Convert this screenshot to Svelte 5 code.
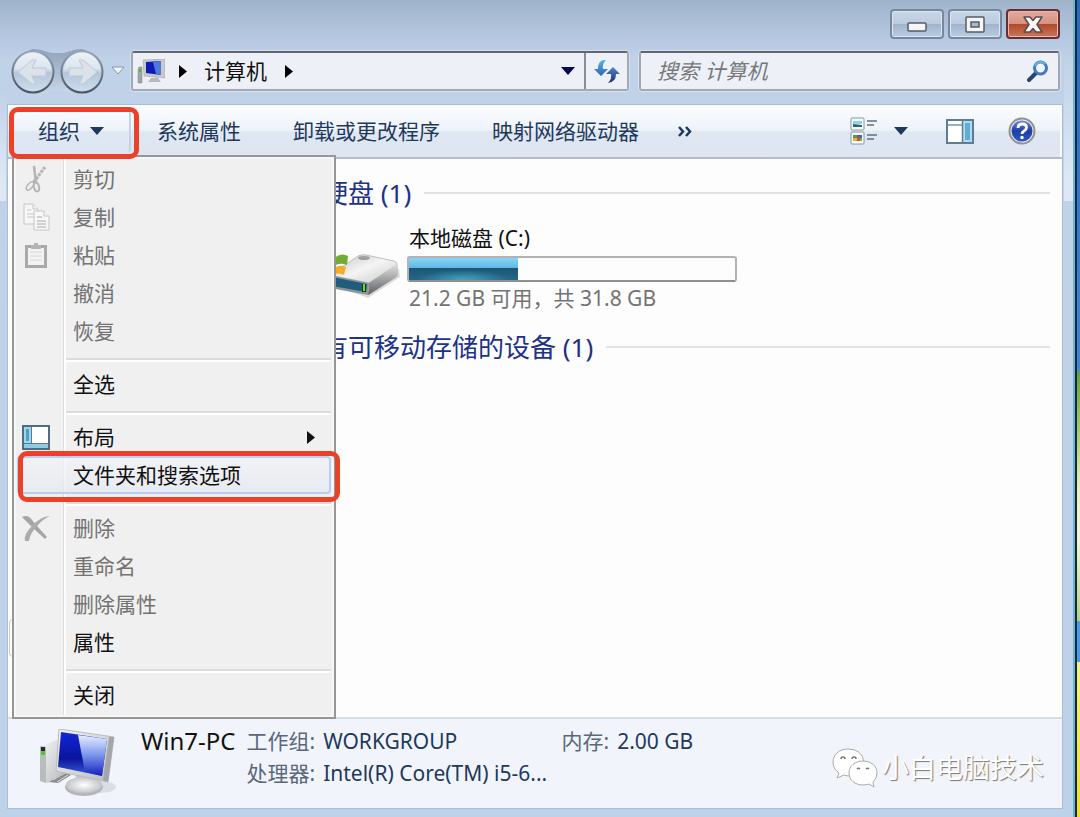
<script>
  const commands = ['系统属性', '卸载或更改程序', '映射网络驱动器'];

  const menu = [
    { label: '剪切', icon: 'cut', disabled: true },
    { label: '复制', icon: 'copy', disabled: true },
    { label: '粘贴', icon: 'paste', disabled: true },
    { label: '撤消', disabled: true },
    { label: '恢复', disabled: true },
    { separator: true },
    { label: '全选' },
    { separator: true },
    { label: '布局', icon: 'layout', submenu: true },
    { label: '文件夹和搜索选项', active: true },
    { separator: true },
    { label: '删除', icon: 'delete', disabled: true },
    { label: '重命名', disabled: true },
    { label: '删除属性', disabled: true },
    { label: '属性' },
    { separator: true },
    { label: '关闭' },
  ];

  const drive = { name: '本地磁盘 (C:)', free: 21.2, total: 31.8 };
  const used = ((drive.total - drive.free) / drive.total) * 100;
</script>

{#snippet computer()}
  <svg viewBox="0 0 80 70" aria-hidden="true">
    <defs>
      <linearGradient id="scr" x1="0" y1="0" x2="0" y2="1">
        <stop offset="0" stop-color="#1226d8" /><stop offset=".6" stop-color="#0a159c" /><stop offset="1" stop-color="#3a5fd8" />
      </linearGradient>
      <linearGradient id="shine" x1="0" y1="0" x2="0" y2="1">
        <stop offset="0" stop-color="#e6efff" /><stop offset=".5" stop-color="#7893ea" /><stop offset="1" stop-color="#1420c0" />
      </linearGradient>
      <linearGradient id="metal" x1="0" y1="0" x2="1" y2="1">
        <stop offset="0" stop-color="#f6f6f6" /><stop offset="1" stop-color="#b9bbbd" />
      </linearGradient>
      <radialGradient id="foot"><stop offset="0" stop-color="#fff" /><stop offset="1" stop-color="#c2c4c7" /></radialGradient>
    </defs>
    <ellipse cx="62" cy="58" rx="15" ry="6" fill="#5a6470" opacity=".15" />
    <path d="M1 17 18 11 25 14V48L8 54 1 52Z" fill="url(#metal)" />
    <path d="M1 17 7 18V54L1 52Z" fill="#b9bcbe" />
    <path d="M2 18h4v5H2z" fill="#252b31" /><path d="M2 22h4v4H2z" fill="#58c42b" />
    <path d="M10 53 26 43 32 46 19 54Z" fill="#888c91" /><path d="M14 51 26 44M18 53 29 46" stroke="#ddd" />
    <path d="M37 43 55 48 57 57H36Z" fill="#c6c8ca" />
    <ellipse cx="45" cy="58" rx="19" ry="9" fill="#b4b6b9" /><ellipse cx="45" cy="56" rx="18" ry="8" fill="url(#foot)" />
    <path d="M20 0 75 8 69 53 17 42Z" fill="url(#metal)" stroke="#b9bbbe" />
    <path d="M70 8 75 8 69 53 64 51Z" fill="#a3a6a9" />
    <path d="M22 3 68 10 63 47 19 38Z" fill="url(#scr)" />
    <path d="M39 6 68 10 63 47 46 43Z" fill="url(#shine)" />
  </svg>
{/snippet}

<div class="desktop">
  <div class="window">
    <header>
      <div class="caption">
        <button class="cap" aria-label="最小化">
          <svg width="20" height="10" viewBox="0 0 20 10"><rect x="1" y="1" width="18" height="8" rx="1" fill="#f5f5f5" stroke="#555c66" stroke-width="1.5" /></svg>
        </button>
        <button class="cap" aria-label="最大化">
          <svg width="20" height="17" viewBox="0 0 20 17"><rect x="1" y="1" width="18" height="15" rx="1" fill="#f5f5f5" stroke="#555c66" stroke-width="1.5" /><rect x="6" y="6" width="8" height="5" fill="#a6bbd0" stroke="#555c66" stroke-width="1.5" /></svg>
        </button>
        <button class="cap close" aria-label="关闭窗口">
          <svg width="20" height="17" viewBox="0 0 20 17"><path d="M1 1h6l3 3.500 3-3.500h6l-5 7.500 5 7.500h-6l-3-3.500-3 3.500H1l5-7.500Z" fill="#f7f7f7" stroke="#5b4a4e" stroke-width="1.500" stroke-linejoin="round" /></svg>
        </button>
      </div>
      <div class="nav">
        <div class="travel">
          <button aria-label="后退和前进">
            <svg width="98" height="46" viewBox="0 0 98 46">
              <defs>
                <linearGradient id="orb" x1="0" y1="0" x2="0" y2="1">
                  <stop offset="0" stop-color="#e4ebf4" /><stop offset=".48" stop-color="#c6d4e4" /><stop offset=".52" stop-color="#b5c6da" /><stop offset="1" stop-color="#cfdeef" />
                </linearGradient>
                <linearGradient id="ring" x1="0" y1="0" x2="0" y2="1">
                  <stop offset="0" stop-color="#95a4b6" /><stop offset="1" stop-color="#4a535e" />
                </linearGradient>
                <linearGradient id="tray" x1="0" y1="0" x2="0" y2="1">
                  <stop offset="0" stop-color="#71859c" /><stop offset=".6" stop-color="#a3b6cd" /><stop offset="1" stop-color="#cfdded" />
                </linearGradient>
              </defs>
              <path d="M25 1C33 1 38 4 44 5H55C61 4 66 1 74 1A23 23 0 0 1 74 46Q66 46 60 43H39Q33 46 25 46A23 23 0 0 1 25 1Z" fill="url(#tray)" opacity=".6" />
              {#each [25, 74] as x}
                <circle cx={x} cy="24" r="20.500" fill="url(#orb)" stroke="url(#ring)" stroke-width="2" />
                <path d="M{x - 18} 22A18 18 0 0 1 {x + 18} 22Q{x} 18 {x - 18} 22" fill="#fff" opacity=".35" />
              {/each}
              <path d="M10 24 24 12H28L24 20H38V28H24L28 36H24Z" fill="#dbe2ea" stroke="#bcc9d8" />
              <path d="M89 24 75 12H71L75 20H61V28H75L71 36H75Z" fill="#dbe2ea" stroke="#bcc9d8" />
            </svg>
          </button>
          <button aria-label="最近浏览的位置">
            <svg width="16" height="12" viewBox="0 0 16 12"><path d="M2 2H14L8 9Z" fill="#f1f4f8" stroke="#8796a9" /></svg>
          </button>
        </div>
        <div class="address">
          <span class="mini">
            <svg width="28" height="25" viewBox="0 0 28 25">
              <path d="M1 10 2 8H5V24H1Z" fill="#a0a6ab" stroke="#7f878e" stroke-width=".5" /><path d="M2 10h2v3H2z" fill="#40c51d" />
              <path d="M6 1 28 0V19L7 17Z" fill="#c7cac9" stroke="#999da1" stroke-width=".5" />
              <path d="M9 3 24 2V16L9 14Z" fill="#101bb5" /><path d="M16 3 24 2V16L19 15Z" fill="#4e79e0" />
              <path d="M14 19h7l3 4H11Z" fill="#b7babd" />
            </svg>
          </span>
          <svg class="crumb" width="9" height="13" viewBox="0 0 9 13"><path d="M0 0 8 6.500 0 13Z" /></svg>
          <a href="#computer">计算机</a>
          <svg class="crumb" width="9" height="13" viewBox="0 0 9 13"><path d="M0 0 8 6.500 0 13Z" /></svg>
          <button class="history" aria-label="历史记录"><svg width="14" height="8" viewBox="0 0 14 8"><path d="M0 0H14L7 8Z" fill="#05074f" /></svg></button>
          <button class="refresh" aria-label="刷新">
            <svg width="26" height="24" viewBox="0 0 26 24">
              <defs><linearGradient id="rf" x1="0" y1="0" x2="0" y2="1"><stop offset="0" stop-color="#58b5e4" /><stop offset="1" stop-color="#2f62b4" /></linearGradient><linearGradient id="rg" x1="0" y1="0" x2="0" y2="1"><stop offset="0" stop-color="#4a86d0" /><stop offset="1" stop-color="#1d2f6c" /></linearGradient></defs>
              <path d="M12 1Q5 0 4 8V10H0L7 17 14 10H9Q8 5 12 1Z" fill="url(#rf)" />
              <path d="M14 24Q22 23 22 15H26L19 8 12 15H17Q18 20 14 24Z" fill="url(#rg)" />
            </svg>
          </button>
        </div>
        <div class="search">
          <input type="text" aria-label="搜索" placeholder="搜索 计算机" />
          <svg width="22" height="22" viewBox="0 0 22 22">
            <path d="M9 13 2 20" stroke="#274477" stroke-width="4" stroke-linecap="round" />
            <circle cx="13.500" cy="8" r="6" fill="#f2f6fb" stroke="#3e78c0" stroke-width="3" /><path d="M8 6a6 6 0 0 1 10-2" fill="none" stroke="#65b4dc" stroke-width="2" />
          </svg>
        </div>
      </div>
    </header>

    <div class="body">
      <div class="toolbar">
        <div class="organize">
          <button class="org" aria-haspopup="menu" aria-expanded="true">组织 <svg width="14" height="8" viewBox="0 0 14 8"><path d="M0 0H14L7 8Z" fill="#1e395b" /></svg></button>
          <ul class="menu">
            {#each menu as item}
              {#if item.separator}
                <li class="sep"></li>
              {:else}
                <li class:marked={item.active}>
                  <button disabled={item.disabled} class:active={item.active}>
                    <span class="glyph">
                      {#if item.icon === 'cut'}
                        <svg width="22" height="28" viewBox="0 0 22 28" fill="none" stroke="#b5b5b5">
                          <path d="M9 1 11 18" stroke-width="2.500" /><path d="M20 2 9 17" stroke-width="3" stroke-dasharray="3 1" /><path d="M8 16h4" stroke-width="3" />
                          <ellipse cx="5" cy="21" rx="2.500" ry="5" transform="rotate(40 5 21)" stroke-width="1.500" /><ellipse cx="11.500" cy="22" rx="2.500" ry="4.500" transform="rotate(-15 11.500 22)" stroke-width="2" />
                        </svg>
                      {:else if item.icon === 'copy'}
                        <svg width="27" height="28" viewBox="0 0 27 28" fill="#f7f7f7" stroke="#c6c6c6">
                          <path d="M1 1h9l5 5v15H1Z" /><path d="M10 1v5h5M4 7h4M4 11h7M4 14h7" />
                          <path d="M11 8h10l5 5v14H11Z" /><path d="M21 8v5h5" /><path d="M14 14h5M14 18h9M14 21h9M14 24h9" stroke="#aaa" />
                        </svg>
                      {:else if item.icon === 'paste'}
                        <svg width="22" height="25" viewBox="0 0 22 25"><path d="M1.500 3.500h19v20h-19Z" fill="#f3f3f3" stroke="#a9a9a9" stroke-width="3" /><path d="M6 6V2h3V0h4v2h3v4Z" fill="#b3b3b3" /><path d="M5 9h12M5 13h12M5 17h12" stroke="#d6d6d6" /></svg>
                      {:else if item.icon === 'layout'}
                        <svg width="28" height="25" viewBox="0 0 28 25"><rect x="1" y="1" width="26" height="23" fill="#fff" stroke="#536a82" stroke-width="2" /><path d="M2 2h7v16H2z" fill="#9bd8ec" /><path d="M4 4h3v12H4z" fill="#4b9fc8" /><path d="M2 19h24v4H2z" fill="#8dcbe0" /><path d="M2 18.500h24M9.500 2v16" stroke="#60788e" /></svg>
                      {:else if item.icon === 'delete'}
                        <svg width="28" height="26" viewBox="0 0 28 26"><path d="M0 2Q6-1 10 5L15 11 25 22 23 24 12 14Q5 7 0 2Z" fill="#a5a5a5" /><path d="M28 1Q19 1 10 11 1 20 3 26L7 26Q8 18 16 10 21 4 28 1Z" fill="#acacac" /></svg>
                      {/if}
                    </span>
                    <span class="label">{item.label}</span>
                    {#if item.submenu}<svg width="8" height="13" viewBox="0 0 8 13"><path d="M0 0 8 6.500 0 13Z" fill="#111" /></svg>{/if}
                  </button>
                </li>
              {/if}
            {/each}
          </ul>
        </div>
        <div class="commands">
          {#each commands as command}<button>{command}</button>{/each}
          <button class="more" aria-label="更多命令"><svg width="14" height="11" viewBox="0 0 14 11"><path d="M1 1 5 5.500 1 10M8 1l4 4.500L8 10" fill="none" stroke="#1e395b" stroke-width="2.500" /></svg></button>
        </div>
        <div class="tools">
          <button aria-label="视图">
            <svg width="28" height="28" viewBox="0 0 28 28">
              <rect x="1" y="1" width="13" height="12" rx="1" fill="#fff" stroke="#7f95ac" /><rect x="1" y="15" width="13" height="12" rx="1" fill="#fff" stroke="#7f95ac" />
              <path d="M3 4h9v3H3z" fill="#8fd4ed" /><path d="M3 7l9 1v2H3z" fill="#27646b" />
              <path d="M3 18h4v3H3z" fill="#55a536" /><path d="M7 18h5v3H7z" fill="#3e64c8" /><path d="M3 21h4v3H3z" fill="#e2b72a" /><path d="M7 20h3v4H7z" fill="#d45135" /><path d="M10 21h2v3h-2z" fill="#71b53a" />
              <path d="M17 4h10M17 8h7M17 18h10M17 22h7" stroke="#5d6f83" stroke-width="1.500" />
            </svg>
          </button>
          <button aria-label="更多选项"><svg width="14" height="8" viewBox="0 0 14 8"><path d="M0 0H14L7 8Z" fill="#1e395b" /></svg></button>
          <button class="pane" aria-label="显示预览窗格">
            <svg width="28" height="25" viewBox="0 0 28 25"><rect x="1" y="1" width="26" height="23" fill="#fff" stroke="#607b96" stroke-width="2" /><path d="M2 6h14" stroke="#7c93aa" stroke-width="1.500" /><path d="M17 2h9v21h-9z" fill="#a7e0f2" /><path d="M19 4h5v17h-5z" fill="#67abd5" /><path d="M16.500 2v21" stroke="#607b96" stroke-width="1.500" /></svg>
          </button>
          <button aria-label="帮助" class="help">
            <svg width="28" height="28" viewBox="0 0 28 28">
              <defs><linearGradient id="hp" x1="0" y1="0" x2="0" y2="1"><stop offset="0" stop-color="#6c8ee0" /><stop offset=".5" stop-color="#1c3ea6" /><stop offset="1" stop-color="#2d57c4" /></linearGradient></defs>
              <circle cx="14" cy="14" r="12.500" fill="#e9e9e7" stroke="#8f9193" stroke-width="2" /><circle cx="14" cy="14" r="10.500" fill="url(#hp)" />
              <path d="M10 11q0-4 4.500-4 4 0 4 3.500 0 2-2.500 3.500-2 1-2 3" fill="none" stroke="#fff" stroke-width="2.800" /><circle cx="14" cy="20.500" r="1.700" fill="#fff" />
            </svg>
          </button>
        </div>
      </div>

      <main>
        <span class="splitter"></span>
        <section>
          <h2>硬盘 (1)</h2>
          <div class="drive">
            <svg class="disk" width="78" height="48" viewBox="0 0 78 48">
              <defs>
                <linearGradient id="top" x1="0" y1="0" x2="1" y2="1"><stop offset="0" stop-color="#bfc1c3" /><stop offset=".5" stop-color="#f5f5f5" /><stop offset="1" stop-color="#c7c8ca" /></linearGradient>
                <linearGradient id="side" x1="0" y1="0" x2="0" y2="1"><stop offset="0" stop-color="#e2e2e2" /><stop offset="1" stop-color="#5c6063" /></linearGradient>
              </defs>
              <path d="M16 37 46 48 78 27 77 19Z" fill="#555" opacity=".2" />
              <path d="M8 25 36 6Q40 4 44 5L72 11Q77 13 73 16L47 33Z" fill="url(#top)" stroke="#aaa" stroke-width=".7" />
              <path d="M47 33 73 16 76 14V24Q76 26 73 28L48 44 46 45Z" fill="url(#side)" />
              <path d="M8 25 47 33 46 45 8 38Z" fill="#8d9498" /><path d="M10 27 45 34 44 42 10 36Z" fill="#205d7c" />
              <ellipse cx="42" cy="8" rx="6" ry="2" fill="#9c9ea0" /><path d="M42 34v8" stroke="#143c2a" stroke-width="4" /><path d="M42 34v7" stroke="#62e324" stroke-width="2" />
              <path d="M12 8Q19 2 26 6L25 15Q18 12 12 16Z" fill="#72ac35" /><path d="M12 18Q18 14 24 17L22 25Q16 22 12 25Z" fill="#f1ad2b" />
            </svg>
            <div class="info">
              <h3>{drive.name}</h3>
              <div class="meter" role="meter" aria-label={drive.name} aria-valuenow={used} aria-valuemin="0" aria-valuemax="100"><div style="width: {used}%"></div></div>
              <p>{drive.free} GB 可用，共 {drive.total} GB</p>
            </div>
          </div>
        </section>
        <section><h2>有可移动存储的设备 (1)</h2></section>
      </main>

      <footer>
        <div class="pc">{@render computer()}</div>
        <strong>Win7-PC</strong>
        <dl>
          <div><dt>工作组:</dt><dd>WORKGROUP</dd></div>
          <div><dt>处理器:</dt><dd>Intel(R) Core(TM) i5-6...</dd></div>
        </dl>
        <dl><div><dt>内存:</dt><dd>2.00 GB</dd></div></dl>
        <div class="brand">
          <svg width="46" height="40" viewBox="0 0 46 40">
            <g fill="#fff" stroke="#aaa">
              <path d="M16 1C7 1 1 7 1 14q0 7 6 11L5 30l7-3q3 1 7 1 13-2 13-14Q30 1 16 1Z" />
              <path d="M31 13c-8 0-14 5-14 12s6 12 14 12q3 0 6-1l5 3-1-5q4-4 4-9c0-7-6-12-14-12Z" />
            </g>
            <g fill="none" stroke="#777" stroke-width="1.500"><path d="M9 11a2 2 0 0 1 4 0M20 11a2 2 0 0 1 4 0M25 21a2 2 0 0 1 3 0M34 21a2 2 0 0 1 3 0" /></g>
          </svg>
          <span>小白电脑技术</span>
        </div>
      </footer>
    </div>
  </div>
</div>

<style>
  :global(body) { margin: 0; }
  * { box-sizing: border-box; }
  .desktop {
    min-height: 100vh;
    padding-right: 5px;
    display: flex;
    background: linear-gradient(#2a68c8, #3d86dc 45%, #6ea53a 46%, #e8f2b8 60%, #f1f7d8 66%, #b4d480 76%, #459cf0 76%, #459cf0 81%, #f6f27c 81%, #f2e020);
    font-family: "Noto Sans", "Noto Sans CJK SC", sans-serif;
    font-size: 21px;
    line-height: 32px;
    color: #111;
  }
  button { font: inherit; color: inherit; background: none; border: 0; padding: 0; margin: 0; display: flex; align-items: center; white-space: nowrap; }
  svg { display: block; flex: none; }
  .window {
    flex: 1;
    min-width: 0;
    display: flex;
    flex-direction: column;
    padding: 0 11px 9px 8px;
    border-right: 2px solid #70b4ce;
    box-shadow: 2px 0 0 #14283c;
    background:
      linear-gradient(#c0d2e800 90px, #dee8f5 180px) left top / 6px 201px no-repeat,
      linear-gradient(#c0d2e800 60px, #dee8f5 180px) right top / 9px 201px no-repeat,
      linear-gradient(#9fb4cb, #b7c9e2 40px, #c0d2e8 60px, #bdd1e8);
  }
  header { display: flex; flex-direction: column; gap: 12px; padding: 9px 2px 14px 0; }
  .caption { display: flex; justify-content: flex-end; gap: 4px; }
  .cap {
    width: 54px; height: 30px; justify-content: center;
    border: 2px solid #77889e; border-radius: 4px;
    background: linear-gradient(#c8d6e6, #bccde0 48%, #9fb4cb 50%, #b9cce3);
    box-shadow: inset 0 0 0 1px #dbe6f2;
  }
  .cap:first-child svg { margin-top: 6px; }
  .close { border-color: #642f35; background: linear-gradient(#e2a99e, #d69383 48%, #b0482c 50%, #c9765a); box-shadow: inset 0 0 0 1px #e8b9ac; }
  .nav { display: grid; grid-template-columns: 113px 498fr 421fr; grid-template-rows: 40px; gap: 10px; align-items: center; }
  .travel { display: flex; align-items: center; gap: 4px; margin-right: -10px; }
  .address, .search { height: 40px; min-width: 0; display: flex; align-items: center; background: #edf1f7; border: 2px solid #a1a9b4; border-top-color: #62676f; border-radius: 3px; box-shadow: 0 0 0 1px #d3e0f0; }
  .address { padding-left: 4px; }
  .mini { margin-right: 14px; }
  .crumb { fill: #000; }
  .address a { color: #111; text-decoration: none; margin: 0 18px 0 16px; }
  .history { margin-left: auto; padding: 12px 9px; }
  .refresh { width: 43px; height: 36px; justify-content: center; border-left: 2px solid #888e96; }
  .search { padding: 0 9px 0 16px; }
  .search input { flex: 1; min-width: 0; height: 34px; padding: 0; border: 0; outline: 0; background: none; font: italic 21px/32px "Noto Sans", "Noto Sans CJK SC", sans-serif; }
  .search input::placeholder { color: #76787c; opacity: 1; }
  .body { flex: 1; display: flex; flex-direction: column; background: #fdfdfd; box-shadow: 0 0 0 1px #a9bdd6; }
  .toolbar {
    height: 54px; display: flex; align-items: center; color: #1e395b;
    background: linear-gradient(#fbfdff, #eef3fa 48%, #dfe7f3 52%, #dfe6f2);
    border-bottom: 2px solid #b1bfd4;
    box-shadow: inset -2px 1px 0 #f8fbff;
  }
  .organize { position: relative; margin-left: 4px; }
  .org { width: 119px; height: 42px; padding-left: 26px; gap: 10px; border-right: 2px solid #c5d2e3; border-radius: 4px; }
  .organize::before, .marked::after { content: ""; position: absolute; z-index: 3; border: 5px solid #ec4128; border-radius: 9px; pointer-events: none; }
  .organize::before { inset: -3px -8px -7px -3px; }
  .menu {
    position: absolute; left: 0; top: 45px; z-index: 2; width: 324px;
    margin: 0; padding: 3px; list-style: none; color: #111;
    border: 2px solid #979797;
    background: linear-gradient(90deg, #0000 49px, #dedede 49px, #dedede 50px, #fff 50px, #fff 52px, #0000 52px), #f0f0f0;
    box-shadow: inset 0 0 0 2px #f7f7f7;
  }
  .menu li { height: 38px; position: relative; }
  .menu .sep { height: 15px; margin-left: 49px; background: linear-gradient(#0000 8px, #dcdcdc 8px, #dcdcdc 10px, #fff 10px, #fff 12px, #0000 12px); }
  .menu button { width: 100%; height: 38px; padding-right: 14px; border: 2px solid transparent; border-radius: 4px; }
  .menu button:disabled { color: #737373; }
  .menu .active { border-color: #b3d0f2; background: linear-gradient(#f1f3f7b0, #e4e9f2b0); }
  .marked::after { inset: -5px -9px -8px 1px; }
  .glyph { width: 34px; display: flex; justify-content: center; margin-right: 20px; }
  .label { flex: 1; text-align: left; }
  .commands { flex: 1; display: flex; gap: 52px; margin-left: 26px; }
  .more { margin-left: -13px; }
  .tools { display: flex; align-items: center; gap: 16px; padding-right: 26px; }
  .pane { margin-left: 22px; }
  .help { margin-left: 18px; }
  main { flex: 1; position: relative; padding: 15px 12px 0 314px; }
  .splitter { position: absolute; left: 1px; top: 460px; width: 8px; height: 38px; border: 1px solid #ccc; border-radius: 4px; }
  h2 { margin: 0; display: flex; align-items: center; gap: 13px; font-size: 26px; font-weight: 400; line-height: 38px; color: #1e3287; white-space: nowrap; }
  h2::after { content: ""; flex: 1; height: 2px; background: #e2e2e2; }
  .drive { display: flex; gap: 7px; padding: 10px 0 14px; }
  .disk { margin-top: 28px; }
  .info { width: 330px; }
  h3, p { margin: 0; padding-left: 2px; font-size: 21px; font-weight: 400; line-height: 32px; white-space: nowrap; }
  p { color: #737373; }
  .meter { height: 26px; margin-top: 2px; border: 2px solid #b2b2b2; border-bottom-color: #8f8f8f; border-radius: 3px; background: #fdfdfd; }
  .meter div { height: 100%; background: radial-gradient(ellipse at 50% 100%, #43a5bf, #43a5bf00 60%) 0 100% / 100% 55% no-repeat, linear-gradient(#86d6f5, #5fb8e0 45%, #1d5677 46%, #246886); }
  footer { min-height: 91px; display: flex; align-items: flex-start; padding: 6px 18px 0 31px; background: #f1f5fb; border-top: 2px solid #d3dee9; }
  .pc { width: 80px; margin: 4px 22px 0 0; }
  strong { font-size: 24px; font-weight: 400; margin-right: 11px; }
  dl { margin: 0; width: 315px; white-space: nowrap; }
  dl + dl { width: 140px; }
  dl div { display: flex; gap: 8px; }
  dt { color: #5a6779; }
  dd { margin: 0; color: #1e395b; }
  .brand { margin: 23px 0 0 auto; display: flex; align-items: center; gap: 4px; font-size: 27px; line-height: 40px; font-weight: 400; color: #fff; text-shadow: 1px 1px 1px #777; white-space: nowrap; }
</style>
